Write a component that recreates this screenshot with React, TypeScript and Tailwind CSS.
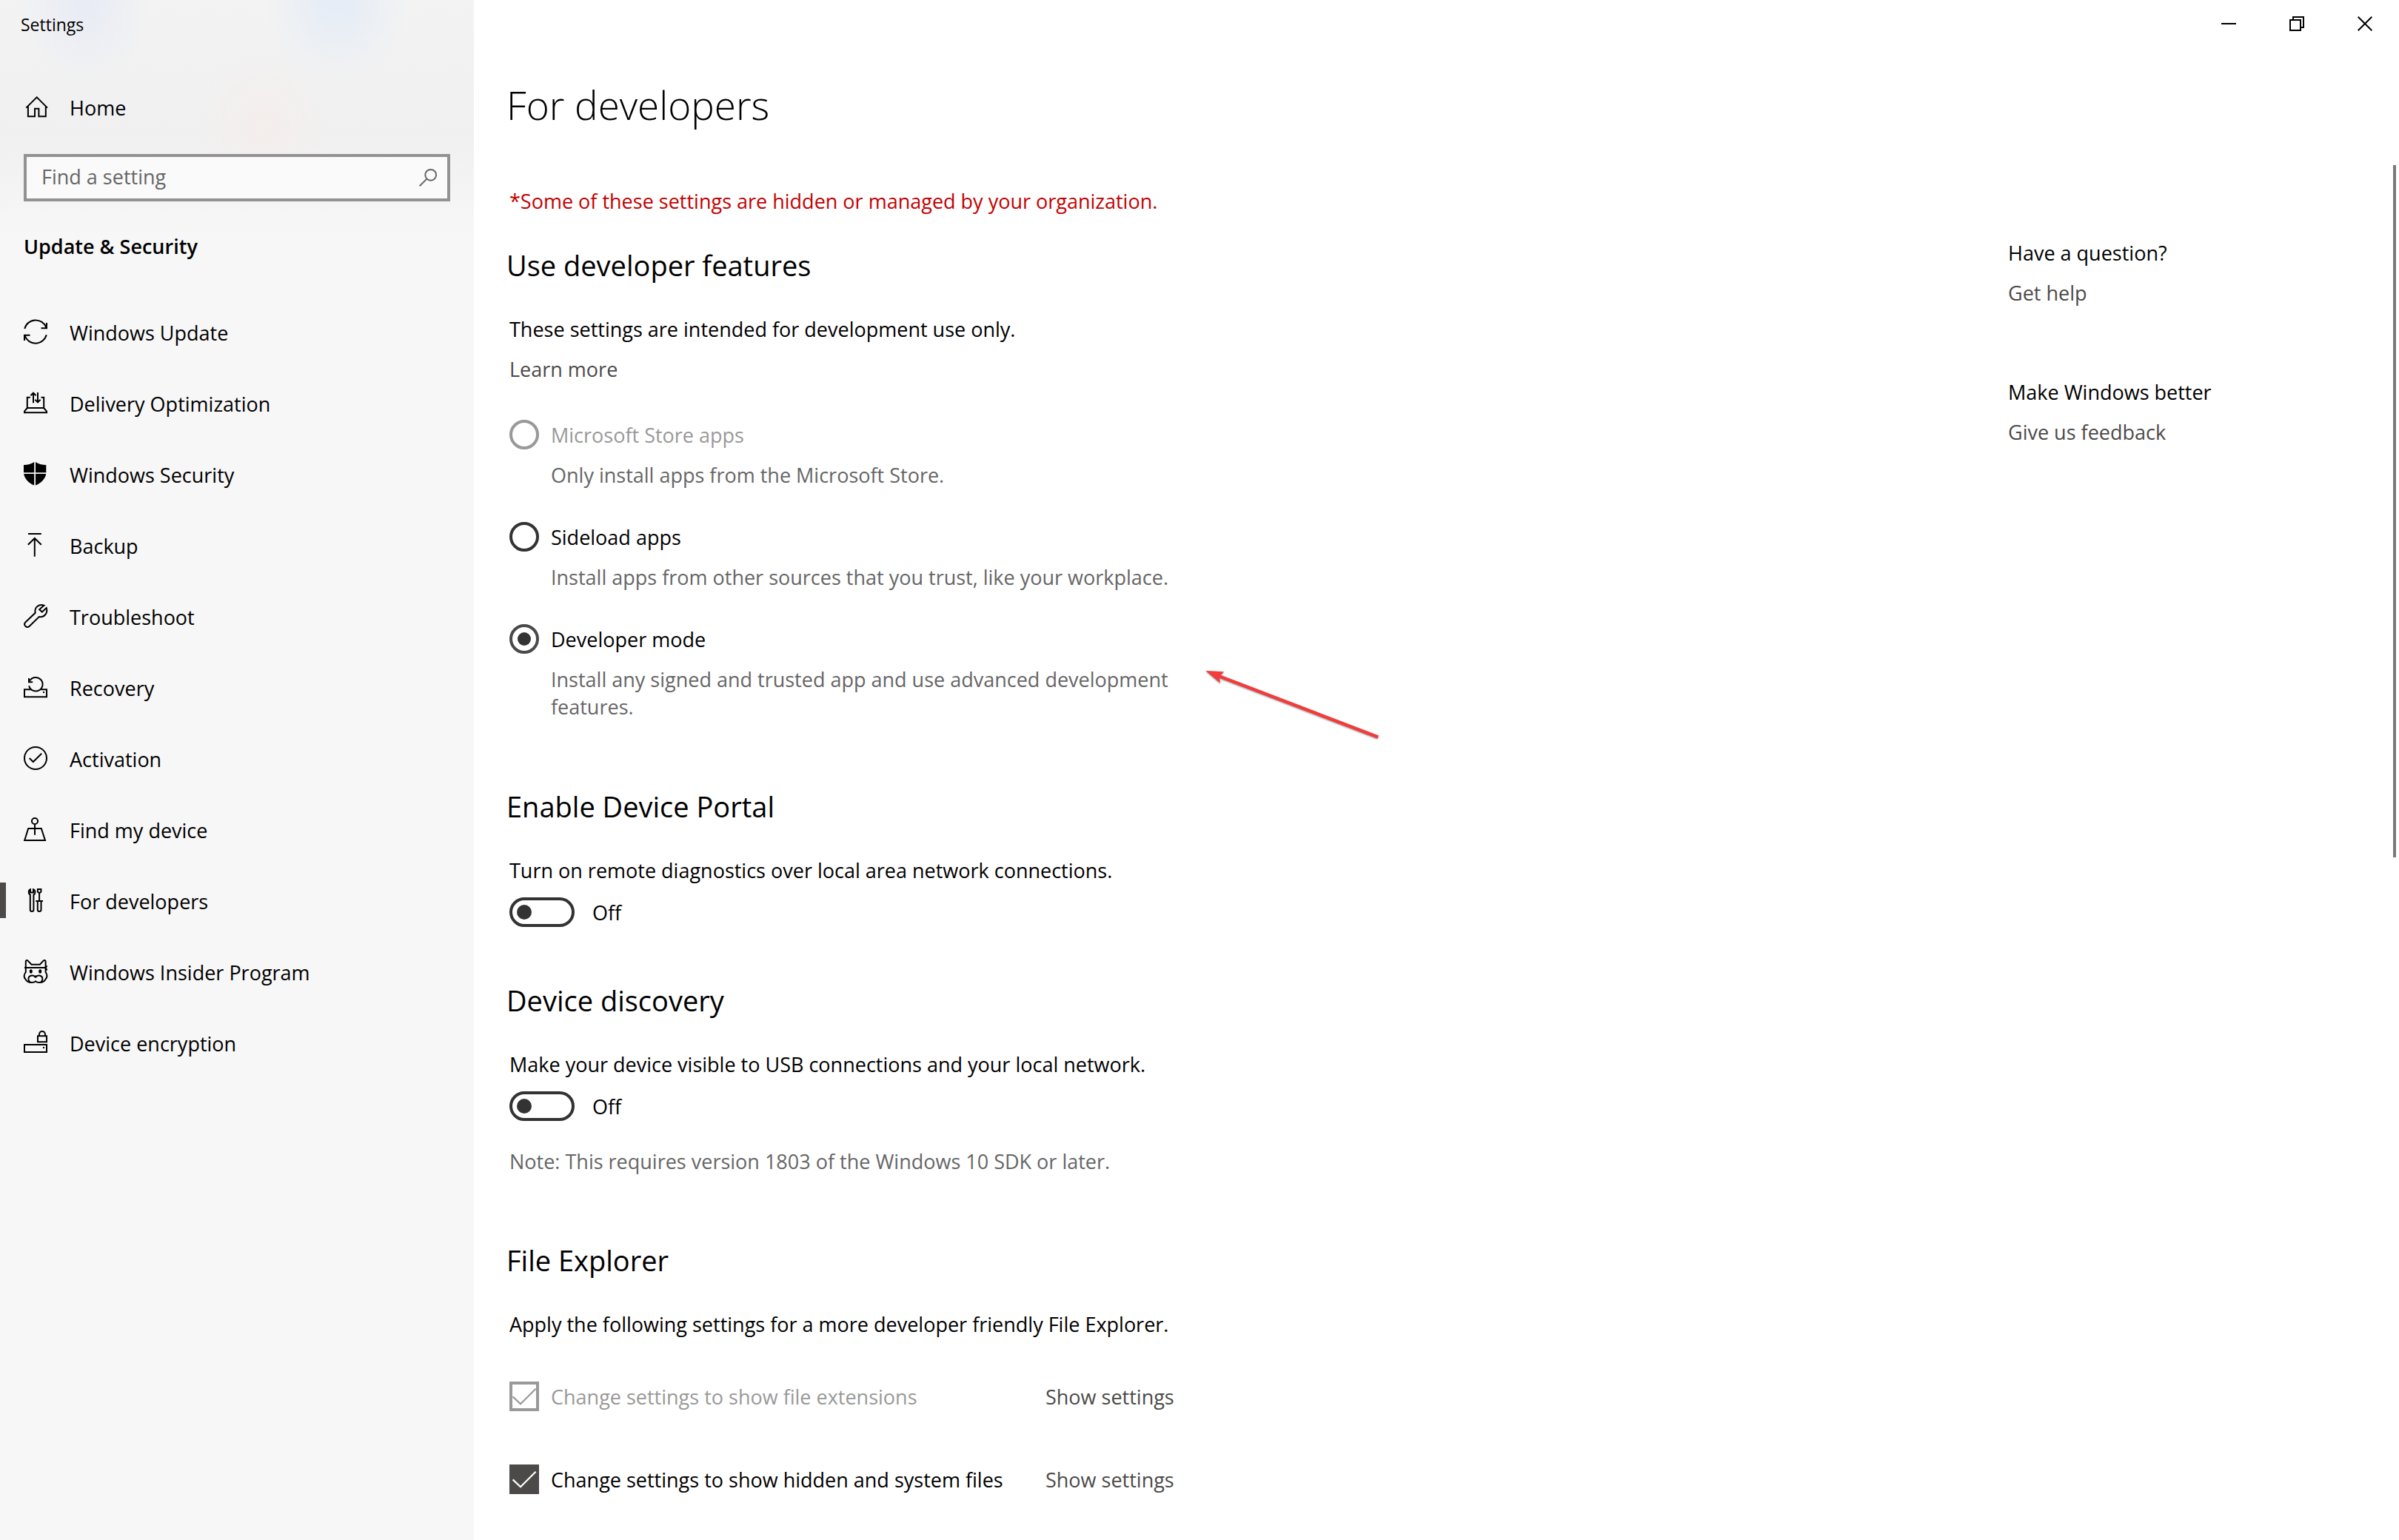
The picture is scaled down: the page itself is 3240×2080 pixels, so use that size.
import type { ReactNode } from "react";

function Icon({ children }: { children: ReactNode }) {
  return (
    <svg
      viewBox="0 0 32 32"
      className="size-8 shrink-0 overflow-visible"
      fill="none"
      stroke="#000"
      strokeWidth="2"
      aria-hidden="true"
    >
      {children}
    </svg>
  );
}

const homeIcon = (
  <Icon>
    <path d="M3.3 17.6 17.7 3.4 32 17.6M5.9 15.5V29.2H15V18.7H20.4V29.2H29.8V15.5" />
  </Icon>
);

const navItems: { label: string; icon: ReactNode; active?: boolean }[] = [
  {
    label: "Windows Update",
    icon: (
      <Icon>
        <path d="M1.3 12A15.2 15.2 0 0 1 30.4 10.5M31 4v7.2h-7.5M30.7 20.2A15.2 15.2 0 0 1 1.6 21.5M1 28v-7.2h7.5" />
      </Icon>
    ),
  },
  {
    label: "Delivery Optimization",
    icon: (
      <Icon>
        <path d="M8.8 8.7H4.8V23H27.2V8.7H23.5M4.8 23 1 27.6V29.3H31V27.6L27.2 23M13 2.6V16.3M9.4 6.2 13 2.6 16.6 6.2M19 2V15.4M15.4 11.8 19 15.4 22.6 11.8" />
      </Icon>
    ),
  },
  {
    label: "Windows Security",
    icon: (
      <Icon>
        <path
          fill="#000"
          stroke="none"
          d="M0 4C6 4 10 2.5 14.2 0V14.2H0zM16 0C20 2.5 24.5 4 30.3 4V14.2H16zM.2 16H14.2V31.6C6 28 1 22 .2 16zM16 16H30.2C29.4 22 24.4 28 16 31.6z"
        />
      </Icon>
    ),
  },
  {
    label: "Backup",
    icon: (
      <Icon>
        <path d="M6 1H23.8M14.8 31.7V7.3M5.8 15.7 14.8 7 23.8 15.7" />
      </Icon>
    ),
  },
  {
    label: "Troubleshoot",
    icon: (
      <Icon>
        <path d="M27.5 1.6C20.5-.6 14.2 4.2 15.6 11.8L2.3 24.5C-1 28 4 33.3 7.8 29.7L20.8 17C27.5 18.4 33 12.3 30.7 5L24.8 10.6 21.2 7.3z" />
      </Icon>
    ),
  },
  {
    label: "Recovery",
    icon: (
      <Icon>
        <path d="M10 19.2H1V29.2H31V19.2H23.5M7.2 14.2A9.3 9.3 0 1 0 8.2 7.6M7 4V9.3H12.2" />
        <path fill="#000" stroke="none" d="M26 22h2v2h-2z" />
      </Icon>
    ),
  },
  {
    label: "Activation",
    icon: (
      <Icon>
        <circle cx="16" cy="16" r="15" />
        <path d="M7.7 16 12.8 21 24.2 9.7" />
      </Icon>
    ),
  },
  {
    label: "Find my device",
    icon: (
      <Icon>
        <circle cx="15" cy="5" r="4.1" />
        <path d="M15 9.3V23.8M12.5 15H6.2L1.2 31H29L23.8 15H17.5M10 15H20" />
      </Icon>
    ),
  },
  {
    label: "For developers",
    active: true,
    icon: (
      <Icon>
        <path d="M9 1.2C6 2.4 6 6.8 8.8 8.6V28.8C8.8 31.8 13.4 31.8 13.4 28.8V8.6C16.2 6.8 16.2 2.4 13 1.2V5.4H9z" />
        <path d="M18.9 1H23.4V4.6L21.1 6.4 18.9 4.6zM21.1 6.4V17M16.3 17H26M18.8 17V28.8C18.8 31.8 23.5 31.8 23.5 28.8V17" />
      </Icon>
    ),
  },
  {
    label: "Windows Insider Program",
    icon: (
      <Icon>
        <path d="M2.8 17.5V2.6C2.8.8 4.6.5 5.6 1.6L10.5 6.8H21.8L26.6 1.6C27.8.5 29.6.8 29.6 2.6V17.5" />
        <path d="M1 11H31M31.5 8.3 29.6 11 31.5 14.5" />
        <path d="M2.8 17C.4 20.2-.4 23.4 2.2 26.2 4 29.5 7 31.2 11 31 13 31 15 30.4 16 29.4 17 30.4 19 31 21 31 25 31.2 28 29.5 29.8 26.2 32.2 23.4 31.8 20.2 29.6 17" />
        <path d="M16 24.2C13 19.8 6.4 21.4 6.4 26.2 6.4 28.2 7.4 29.6 8.8 30.6M16 24.2C19 19.8 25.4 21.4 25.4 26.2 25.4 28.2 24.6 29.6 23.2 30.6M14 22.4H18" />
        <ellipse cx="9.8" cy="16" rx="2" ry="2.8" fill="#000" stroke="none" />
        <ellipse cx="22.2" cy="16" rx="2" ry="2.8" fill="#000" stroke="none" />
      </Icon>
    ),
  },
  {
    label: "Device encryption",
    icon: (
      <Icon>
        <path d="M1 19H31V29H1zM19 7.3H31V15.2H19zM21 7V5.2C21-.4 29 -.4 29 5.2V7" />
        <path fill="#000" stroke="none" d="M26 22h2v2h-2z" />
      </Icon>
    ),
  },
];

function NavLink({ label, icon, active }: { label: string; icon: ReactNode; active?: boolean }) {
  return (
    <a
      href="#"
      aria-current={active ? "page" : undefined}
      className="relative flex h-24 items-center gap-[30px] pl-8 text-black"
    >
      {active && <span className="absolute left-0 h-12 w-2 bg-[#4c4a48]" />}
      {icon}
      <span className="pt-[3px]">{label}</span>
    </a>
  );
}

function Sidebar() {
  return (
    <aside className="w-[640px] shrink-0 bg-[#f7f7f7] bg-[radial-gradient(90px_110px_at_115px_0px,#e7ebf5,transparent),radial-gradient(100px_110px_at_455px_0px,#e4ecf7,transparent),radial-gradient(90px_100px_at_355px_170px,#f4eeec,transparent),linear-gradient(#f3f3f3,#f0f0f0_180px,#f7f7f7_320px)]">
      <div className="flex h-16 items-center pl-7 pt-[2px] text-[23px]">Settings</div>
      <nav className="pt-8">
        <NavLink label="Home" icon={homeIcon} />
        <div className="mx-8 mt-4 flex h-16 items-center border-4 border-[#929292] bg-[#fafafa] pr-[14px]">
          <input
            type="text"
            aria-label="Find a setting"
            placeholder="Find a setting"
            className="min-w-0 flex-1 bg-transparent pb-1 pl-5 text-black outline-none placeholder:text-[#666]"
          />
          <svg viewBox="0 0 24 24" className="size-6 overflow-visible" fill="none" stroke="#666" strokeWidth="2" aria-hidden="true">
            <circle cx="15.7" cy="8.3" r="7.4" />
            <path d="M10.4 13.6.7 23.3" />
          </svg>
        </div>
        <h2 className="mb-[49px] mt-[42px] pl-8 font-semibold">Update &amp; Security</h2>
        {navItems.map((item) => (
          <NavLink key={item.label} {...item} />
        ))}
      </nav>
    </aside>
  );
}

function WindowControls() {
  return (
    <div className="flex h-16 justify-end">
      <button type="button" aria-label="Minimize" className="flex w-[92px] items-center justify-center">
        <svg viewBox="0 0 20 20" className="size-5" fill="none" stroke="#000" strokeWidth="2">
          <path d="M0 10H20" />
        </svg>
      </button>
      <button type="button" aria-label="Restore" className="flex w-[92px] items-center justify-center">
        <svg viewBox="0 0 20 20" className="size-5" fill="none" stroke="#000" strokeWidth="2">
          <path d="M1 5H15V19H1zM5 5V1H19V15H15" />
        </svg>
      </button>
      <button type="button" aria-label="Close" className="flex w-[92px] items-center justify-center">
        <svg viewBox="0 0 20 20" className="size-5" fill="none" stroke="#000" strokeWidth="2">
          <path d="M.7.7 19.3 19.3M19.3.7.7 19.3" />
        </svg>
      </button>
    </div>
  );
}

function SectionTitle({ children }: { children: ReactNode }) {
  return <h2 className="-ml-1 mb-[42px] text-[38px] leading-[52px]">{children}</h2>;
}

function RadioOption(props: {
  id: string;
  label: string;
  description: string;
  checked?: boolean;
  disabled?: boolean;
  children?: ReactNode;
}) {
  return (
    <div className="relative">
      <div className="flex items-center gap-4">
        <input
          type="radio"
          name="developer-features"
          id={props.id}
          defaultChecked={props.checked}
          disabled={props.disabled}
          aria-describedby={props.id + "-description"}
          className="grid size-10 shrink-0 appearance-none place-content-center rounded-full border-4 border-[#333] before:size-[18px] before:rounded-full checked:border-[#4c4a48] checked:before:bg-[#333] checked:before:content-[''] disabled:border-[#999]"
        />
        <label htmlFor={props.id} className={props.disabled ? "text-[#999]" : "text-black"}>
          {props.label}
        </label>
      </div>
      <p id={props.id + "-description"} className="mt-4 pl-14 text-[#666]">
        {props.description}
      </p>
      {props.children}
    </div>
  );
}

function Toggle({ id, label }: { id: string; label: string }) {
  return (
    <>
      <p id={id + "-label"}>{label}</p>
      <div className="mt-[18px] flex items-center gap-6">
        <input
          type="checkbox"
          role="switch"
          id={id}
          aria-labelledby={id + "-label"}
          className="flex h-10 w-[88px] shrink-0 appearance-none items-center rounded-full border-4 border-[#333] pl-[6px] before:size-5 before:rounded-full before:bg-[#333] before:content-['']"
        />
        <label htmlFor={id}>Off</label>
      </div>
    </>
  );
}

function CheckRow({ id, label, disabled }: { id: string; label: string; disabled?: boolean }) {
  return (
    <div className="flex h-10 items-center">
      <div className="flex w-[724px] items-center gap-4">
        <span className="relative size-10">
          <input
            type="checkbox"
            id={id}
            defaultChecked
            disabled={disabled}
            className="block size-10 appearance-none border-4 border-[#4c4a48] bg-[#4c4a48] disabled:border-[#999] disabled:bg-white"
          />
          <svg
            viewBox="0 0 40 40"
            className={
              disabled
                ? "pointer-events-none absolute inset-0 text-[#999]"
                : "pointer-events-none absolute inset-0 text-white"
            }
            fill="none"
            stroke="currentColor"
            strokeWidth="2.2"
            aria-hidden="true"
          >
            <path d="M4.6 20.4 15 30.2 35.6 9.8" />
          </svg>
        </span>
        <label htmlFor={id} className={disabled ? "text-[#999]" : "text-black"}>
          {label}
        </label>
      </div>
      <a href="#" className="text-[#4c4a48]">
        Show settings
      </a>
    </div>
  );
}

function PointerArrow() {
  return (
    <svg
      viewBox="0 0 244 100"
      className="absolute left-[936px] top-[59px] w-[244px] drop-shadow-[0_1px_1px_#888]"
      fill="#f33b3b"
      aria-hidden="true"
    >
      <path d="M4.5 4 29 5.2 24.6 9.8 238 91.4 236.2 95.4 23 13.8 23.8 20.4z" />
    </svg>
  );
}

export default function App() {
  return (
    <div className="flex min-h-screen bg-white font-['Open_Sans','Noto_Sans',sans-serif] text-[27px] leading-[37px] text-black">
      <Sidebar />
      <div className="relative min-w-0 flex-1">
        <WindowControls />
        <div className="absolute right-1 top-[223px] h-[935px] w-1 bg-[#7a7a7a]" />
        <main className="pl-12 pt-[42px]">
          <h1 className="-ml-1 text-[53px] font-[340] leading-[72px]">For developers</h1>
          <div className="mt-[75px] flex justify-between">
            <div className="w-[900px]">
              <p className="text-[#c40000]">*Some of these settings are hidden or managed by your organization.</p>

              <section className="mt-[42px]">
                <SectionTitle>Use developer features</SectionTitle>
                <p>These settings are intended for development use only.</p>
                <a href="#" className="mt-[17px] block text-[#4c4a48]">
                  Learn more
                </a>
                <div className="mt-[50px] flex flex-col gap-[45px]">
                  <RadioOption
                    id="store-apps"
                    label="Microsoft Store apps"
                    description="Only install apps from the Microsoft Store."
                    disabled
                  />
                  <RadioOption
                    id="sideload-apps"
                    label="Sideload apps"
                    description="Install apps from other sources that you trust, like your workplace."
                  />
                  <RadioOption
                    id="developer-mode"
                    label="Developer mode"
                    description="Install any signed and trusted app and use advanced development features."
                    checked
                  >
                    <PointerArrow />
                  </RadioOption>
                </div>
              </section>

              <section className="mt-[90px]">
                <SectionTitle>Enable Device Portal</SectionTitle>
                <Toggle id="device-portal" label="Turn on remote diagnostics over local area network connections." />
              </section>

              <section className="mt-[73px]">
                <SectionTitle>Device discovery</SectionTitle>
                <Toggle
                  id="device-discovery"
                  label="Make your device visible to USB connections and your local network."
                />
                <p className="mt-9 text-[#666]">Note: This requires version 1803 of the Windows 10 SDK or later.</p>
              </section>

              <section className="mt-[89px]">
                <SectionTitle>File Explorer</SectionTitle>
                <p>Apply the following settings for a more developer friendly File Explorer.</p>
                <div className="mt-[59px] flex flex-col gap-[72px]">
                  <CheckRow id="file-extensions" label="Change settings to show file extensions" disabled />
                  <CheckRow id="hidden-files" label="Change settings to show hidden and system files" />
                </div>
              </section>
            </div>

            <aside className="flex w-[528px] flex-col gap-[97px] pt-[70px]">
              <div className="flex flex-col gap-[17px]">
                <h3>Have a question?</h3>
                <a href="#" className="text-[#4c4a48]">
                  Get help
                </a>
              </div>
              <div className="flex flex-col gap-[17px]">
                <h3>Make Windows better</h3>
                <a href="#" className="text-[#4c4a48]">
                  Give us feedback
                </a>
              </div>
            </aside>
          </div>
        </main>
      </div>
    </div>
  );
}
